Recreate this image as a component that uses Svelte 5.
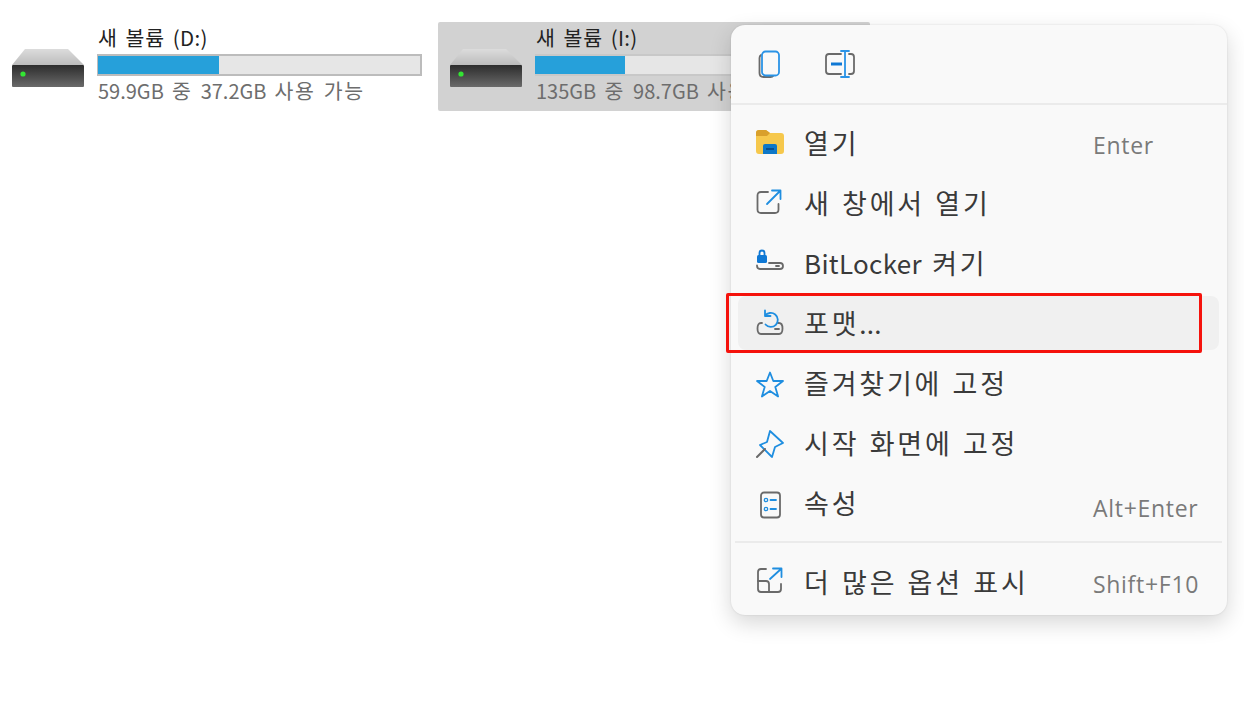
<script>
  const drives = [
    { name: "새 볼륨 (D:)", used: 37.6, info: "59.9GB 중 37.2GB 사용 가능", selected: false },
    { name: "새 볼륨 (I:)", used: 27.8, info: "135GB 중 98.7GB 사용 가능", selected: true }
  ];

  const items = [
    { icon: "folder", label: "열기", keys: "Enter" },
    { icon: "open", label: "새 창에서 열기" },
    { icon: "lock", label: "BitLocker 켜기" },
    { icon: "format", label: "포맷...", active: true },
    { icon: "star", label: "즐겨찾기에 고정" },
    { icon: "pin", label: "시작 화면에 고정" },
    { icon: "props", label: "속성", keys: "Alt+Enter", low: true }
  ];

  // hangul and latin need different spacing, odd parts are latin
  const runs = (text) => text.split(/([!-~]+)/);
</script>

{#snippet mixed(text)}
  {#each runs(text) as part, i}{#if i % 2}<span class="latin">{part}</span>{:else}{part}{/if}{/each}
{/snippet}

{#snippet icon(name)}
  <svg class="icon" viewBox="0 0 28 28" fill="none" stroke-width="1.8" stroke-linecap="round" stroke-linejoin="round">
    {#if name === "folder"}
      <path d="M0 4q0-3 3-3h7l4 3h11q3 0 3 3v15q0 3-3 3H3q-3 0-3-3z" fill="#f6c84c" />
      <path d="M0 4q0-3 3-3h7l4 3-3 3H0z" fill="#d9a02c" />
      <path d="M7 25v-8q0-2 2-2h10q2 0 2 2v8z" fill="#0f78c8" />
      <rect x="10" y="19" width="8" height="2" fill="#0a4f8f" />
    {:else if name === "open"}
      <path d="M12 3H5q-3.500 0-3.500 3.500v14Q1.500 24 5 24h14q3.500 0 3.500-3.500V15" stroke="#6a6a6a" />
      <path d="M11 15 24 2M16 1.500h8.500V10" stroke="#1f8ee0" />
    {:else if name === "lock"}
      <rect x="1" y="6" width="10" height="8" rx="1.500" fill="#0f78d4" />
      <path d="M3.500 6V4a2.500 2.500 0 0 1 5 0v2" stroke="#0f78d4" />
      <path d="M1 16.500Q1 20 4 20h20q3 0 3-3t-3-3H13" stroke="#6a6a6a" />
      <path d="M20 17h3" stroke="#6a6a6a" />
    {:else if name === "format"}
      <path d="M6 14H5q-3.500 0-3.500 5.500T5 25h18q3.500 0 3.500-5.500T23 14h-1" stroke="#6a6a6a" />
      <path d="M19 20h4" stroke="#6a6a6a" />
      <path d="M9 1.500v5.500h5.500M9 7a7 7 0 1 1 .5 8.500" stroke="#1f8ee0" />
    {:else if name === "star"}
      <path d="M14 3.500 17.300 12H27l-7.700 6 2.800 9.500L14 22l-8.100 5.500L8.700 18 1 12h9.700z" stroke="#1f8ee0" />
    {:else if name === "pin"}
      <path d="M14 2 27 14l-8 4-3 10L4 16l7-3z" stroke="#1f8ee0" />
      <path d="M9 20 1 28" stroke="#6a6a6a" stroke-width="2" />
    {:else if name === "props"}
      <rect x="5" y="3.500" width="19" height="25" rx="3" stroke="#6a6a6a" />
      <circle cx="10" cy="11" r="1.700" stroke="#1f8ee0" stroke-width="1.300" />
      <circle cx="10" cy="20" r="1.700" stroke="#1f8ee0" stroke-width="1.300" />
      <path d="M14.500 11H20M14.500 20H20" stroke="#1f8ee0" />
    {:else if name === "more"}
      <path d="M10 1H5Q2 1 2 4v17q0 3 3 3h17q3 0 3-3v-5" stroke="#6a6a6a" />
      <path d="M2 13h8q3 0 3 3v8" stroke="#6a6a6a" />
      <path d="M14 11 25 1M17 .5h8.500V9" stroke="#1f8ee0" />
    {/if}
  </svg>
{/snippet}

{#snippet driveIcon()}
  <svg class="drive-icon" viewBox="0 0 72 39">
    <defs>
      <linearGradient id="hddTop" x1="0" y1="0" x2="0" y2="1">
        <stop offset="0" stop-color="#dcdcdc" />
        <stop offset="1" stop-color="#bcbcbc" />
      </linearGradient>
      <linearGradient id="hddBody" x1="0" y1="0" x2="0" y2="1">
        <stop offset="0" stop-color="#2c2c2c" />
        <stop offset="1" stop-color="#6a6a6a" />
      </linearGradient>
    </defs>
    <path d="M13 0H56L72 16H0z" fill="url(#hddTop)" />
    <rect x="0" y="16" width="72" height="22" rx="1" fill="url(#hddBody)" />
    <circle cx="11" cy="25" r="2.600" fill="#33e533" />
  </svg>
{/snippet}

<main class="page">
  <div class="drives">
    {#each drives as drive}
      <div class="drive" class:selected={drive.selected}>
        {@render driveIcon()}
        <div class="drive-text">
          <div class="drive-name">{@render mixed(drive.name)}</div>
          <div class="bar"><div class="fill" style:width="{drive.used}%"></div></div>
          <div class="drive-info">{@render mixed(drive.info)}</div>
        </div>
      </div>
    {/each}
  </div>

  <div class="menu">
    <div class="toolbar">
      <button type="button" aria-label="복사">
        <svg class="icon" viewBox="0 0 28 28" fill="none" stroke-width="1.800" stroke-linecap="round" stroke-linejoin="round">
          <path d="M5 5Q3.500 6 3.500 8v15q0 4 4 4h7q2 0 3-1.500" stroke="#6a6a6a" />
          <rect x="6" y="1.500" width="17" height="24" rx="3.500" fill="#f9f9f9" stroke="#2a93e6" />
        </svg>
      </button>
      <button type="button" aria-label="이름 바꾸기">
        <svg class="icon" viewBox="0 0 28 28" fill="none" stroke-width="1.800" stroke-linecap="round" stroke-linejoin="round">
          <path d="M15 4H3Q0 4 0 7v14q0 3 3 3h12M23 4h2q3 0 3 3v14q0 3-3 3h-2" stroke="#6a6a6a" />
          <path d="M15 1h8M19 1v26M15 27h8" stroke="#2a93e6" />
          <path d="M5 14h11" stroke="#0f78d4" stroke-width="3" stroke-linecap="butt" />
        </svg>
      </button>
    </div>

    <div class="list">
      {#each items as item}
        <div class="row" class:active={item.active}>
          {@render icon(item.icon)}
          <span class="label">{@render mixed(item.label)}</span>
          {#if item.keys}<span class="keys" class:low={item.low}>{item.keys}</span>{/if}
          {#if item.active}<div class="callout"></div>{/if}
        </div>
      {/each}
      <div class="divider"></div>
      <div class="row">
        {@render icon("more")}
        <span class="label">{@render mixed("더 많은 옵션 표시")}</span>
        <span class="keys">Shift+F10</span>
      </div>
    </div>
  </div>
</main>

<style>
  :global(body) {
    background: #fff;
  }

  .page {
    position: relative;
    height: 722px;
    overflow: hidden;
    font-family: "Noto Sans CJK KR", "Open Sans", sans-serif;
  }

  .drives {
    display: flex;
    gap: 6px;
    padding-top: 22px;
  }

  .drive {
    display: flex;
    gap: 13px;
    box-sizing: border-box;
    width: 432px;
    height: 89px;
    padding: 2px 10px 0 12px;
    border-radius: 2px;
  }

  .drive.selected {
    background: #d2d2d2;
  }

  .drive-icon {
    flex: none;
    width: 72px;
    height: 39px;
    margin-top: 25px;
  }

  .drive-text {
    flex: 1;
    min-width: 0;
  }

  .drive-name {
    padding-left: 1px;
    font-size: 20.500px;
    line-height: 26px;
    letter-spacing: 1px;
    word-spacing: 2px;
    color: #222;
    margin-bottom: 4px;
    white-space: nowrap;
  }

  .drive-name .latin {
    letter-spacing: 0.3px;
  }

  .bar {
    box-sizing: border-box;
    height: 22px;
    background: #e6e6e6;
    border: solid #bcbcbc;
    border-width: 2px 2px 2px 1px;
  }

  .selected .bar {
    border-color: #c8c8c8;
    border-left-width: 0;
  }

  .fill {
    height: 100%;
    background: #26a0da;
  }

  .drive-info {
    padding-left: 1px;
    font-size: 20.500px;
    line-height: 28px;
    letter-spacing: 1.600px;
    word-spacing: 2px;
    color: #6d6d6d;
    white-space: nowrap;
  }

  .drive-info .latin {
    font-size: 20px;
    letter-spacing: 0;
  }

  .menu {
    position: absolute;
    left: 731px;
    top: 25px;
    box-sizing: border-box;
    width: 496px;
    height: 590px;
    background: #f9f9f9;
    border-radius: 14px;
    box-shadow: 0 8px 22px rgba(0, 0, 0, 0.16), 0 0 2px rgba(0, 0, 0, 0.12);
  }

  .toolbar {
    display: flex;
    align-items: flex-start;
    gap: 42px;
    box-sizing: border-box;
    height: 80px;
    padding: 25px 0 0 25px;
    border-bottom: 2px solid #ebebeb;
  }

  .toolbar button {
    display: block;
    padding: 0;
    border: 0;
    background: none;
  }

  .list {
    display: flex;
    flex-direction: column;
    padding: 8px 8px 3px 7px;
  }

  .row {
    position: relative;
    display: grid;
    grid-template-columns: 28px 1fr auto;
    align-items: center;
    column-gap: 20px;
    height: 54px;
    margin: 3px 0;
    padding: 0 10px 0 18px;
    border-radius: 8px;
  }

  .row.active {
    background: #f0f0f0;
  }

  .icon {
    display: block;
    width: 28px;
    height: 28px;
    overflow: visible;
  }

  .label {
    margin-bottom: 2px;
    font-size: 27px;
    letter-spacing: 2.800px;
    word-spacing: 1.500px;
    color: #3a3a3a;
    white-space: nowrap;
  }

  .label .latin {
    font-size: 26px;
    letter-spacing: 0.3px;
  }

  .keys {
    width: 116px;
    margin-top: 4px;
    font-family: "Open Sans", sans-serif;
    font-size: 23px;
    letter-spacing: 0.7px;
    color: #7a7a7a;
    white-space: nowrap;
  }

  .keys.low {
    margin-top: 10px;
  }

  .callout {
    position: absolute;
    left: -12px;
    right: 17px;
    top: -3px;
    bottom: -3px;
    border: 3px solid #f5120c;
    border-radius: 2px;
  }

  .divider {
    height: 2px;
    margin: 8px -3px 9px -3px;
    background: #ebebeb;
  }
</style>
